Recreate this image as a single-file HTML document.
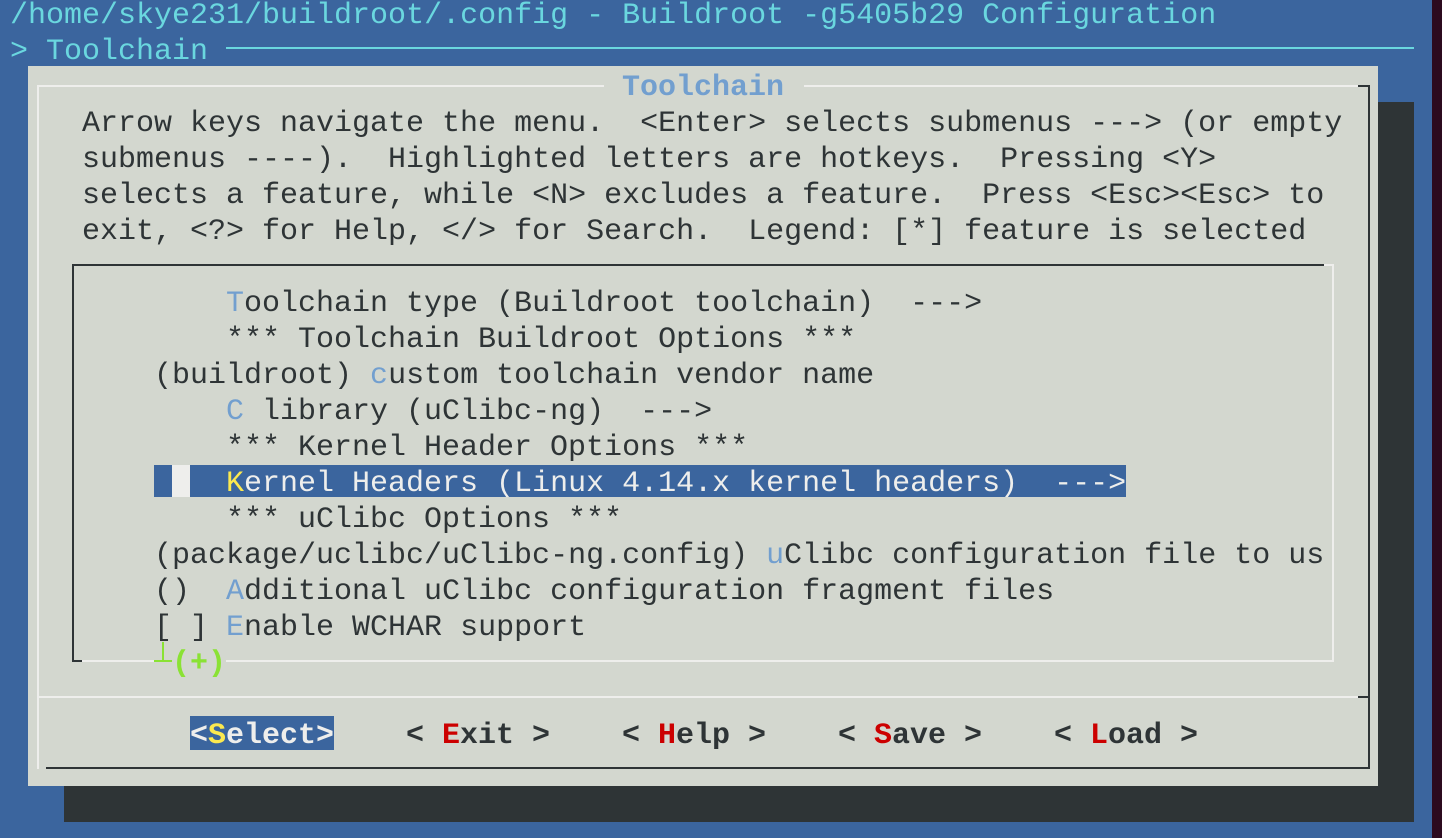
<!DOCTYPE html>
<html><head><meta charset="utf-8"><style>
html,body{margin:0;padding:0}
body{width:1442px;height:838px;background:#3b659e;position:relative;overflow:hidden;font-family:"Liberation Mono","DejaVu Sans Mono",monospace;font-size:30px}
.t{position:absolute;height:36px;line-height:36px;white-space:pre;color:#2e3436;margin-top:2px}
.b{position:absolute}
.hk{color:#729fcf}
.cy{color:#6ad7df}
</style></head><body>
<div class="b" style="left:1432px;top:0;width:10px;height:838px;background:#2c0a1f"></div>
<div class="t cy" style="left:10px;top:-4px">/home/skye231/buildroot/.config - Buildroot -g5405b29 Configuration</div>
<div class="t cy" style="left:10px;top:32px">&gt; Toolchain</div>
<div class="b" style="left:226px;top:47px;width:1188px;height:2px;background:#6ad7df"></div>
<div class="b" style="left:64px;top:102px;width:1350px;height:720px;background:#2e3436"></div>
<div class="b" style="left:28px;top:66px;width:1350px;height:720px;background:#d3d7cf"></div>
<div class="b" style="left:37px;top:85px;width:1331px;height:2px;background:#eeeeec"></div>
<div class="b" style="left:37px;top:85px;width:2px;height:684px;background:#eeeeec"></div>
<div class="b" style="left:1358px;top:85px;width:12px;height:2px;background:#2e3436"></div>
<div class="b" style="left:1368px;top:85px;width:2px;height:684px;background:#2e3436"></div>
<div class="b" style="left:46px;top:767px;width:1324px;height:2px;background:#2e3436"></div>
<div class="b" style="left:37px;top:696px;width:1333px;height:2px;background:#eeeeec"></div>
<div class="b" style="left:1358px;top:696px;width:12px;height:2px;background:#2e3436"></div>
<div class="b" style="left:604px;top:78px;width:200px;height:16px;background:#d3d7cf"></div>
<div class="t hk" style="left:622px;top:68px;font-weight:bold">Toolchain</div>
<div class="t" style="left:82px;top:104px">Arrow keys navigate the menu.  &lt;Enter&gt; selects submenus ---&gt; (or empty</div>
<div class="t" style="left:82px;top:140px">submenus ----).  Highlighted letters are hotkeys.  Pressing &lt;Y&gt;</div>
<div class="t" style="left:82px;top:176px">selects a feature, while &lt;N&gt; excludes a feature.  Press &lt;Esc&gt;&lt;Esc&gt; to</div>
<div class="t" style="left:82px;top:212px">exit, &lt;?&gt; for Help, &lt;/&gt; for Search.  Legend: [*] feature is selected</div>
<div class="b" style="left:72px;top:264px;width:1254px;height:2px;background:#2e3436"></div>
<div class="b" style="left:1324px;top:264px;width:10px;height:2px;background:#eeeeec"></div>
<div class="b" style="left:1332px;top:264px;width:2px;height:398px;background:#eeeeec"></div>
<div class="b" style="left:72px;top:264px;width:2px;height:398px;background:#2e3436"></div>
<div class="b" style="left:72px;top:660px;width:10px;height:2px;background:#2e3436"></div>
<div class="b" style="left:82px;top:660px;width:72px;height:2px;background:#eeeeec"></div>
<div class="b" style="left:154px;top:660px;width:18px;height:2px;background:#8ae234"></div>
<div class="b" style="left:162px;top:642px;width:2px;height:19px;background:#8ae234"></div>
<div class="t" style="left:172px;top:644px;color:#8ae234;font-weight:bold">(+)</div>
<div class="b" style="left:226px;top:660px;width:1108px;height:2px;background:#eeeeec"></div>
<div class="t" style="left:226px;top:284px"><span class="hk">T</span>oolchain type (Buildroot toolchain)  ---&gt;</div>
<div class="t" style="left:226px;top:320px">*** Toolchain Buildroot Options ***</div>
<div class="t" style="left:154px;top:356px">(buildroot) <span class="hk">c</span>ustom toolchain vendor name</div>
<div class="t" style="left:226px;top:392px"><span class="hk">C</span> library (uClibc-ng)  ---&gt;</div>
<div class="t" style="left:226px;top:428px">*** Kernel Header Options ***</div>
<div class="b" style="left:154px;top:465px;width:972px;height:32px;background:#3b659e"></div>
<div class="b" style="left:172px;top:465px;width:18px;height:32px;background:#eeeeec"></div>
<div class="t" style="left:226px;top:464px;color:#eeeeec"><span style="color:#fce94f">K</span>ernel Headers (Linux 4.14.x kernel headers)  ---&gt;</div>
<div class="t" style="left:226px;top:500px">*** uClibc Options ***</div>
<div class="t" style="left:154px;top:536px">(package/uclibc/uClibc-ng.config) <span class="hk">u</span>Clibc configuration file to us</div>
<div class="t" style="left:154px;top:572px">()  <span class="hk">A</span>dditional uClibc configuration fragment files</div>
<div class="t" style="left:154px;top:608px">[ ] <span class="hk">E</span>nable WCHAR support</div>
<div class="b" style="left:190px;top:716px;width:144px;height:34px;background:#3b659e"></div>
<div class="t" style="left:190px;top:716px;color:#eeeeec;font-weight:bold">&lt;<span style="color:#fce94f">S</span>elect&gt;</div>
<div class="t" style="left:406px;top:716px;font-weight:bold">&lt; <span style="color:#cc0000">E</span>xit &gt;</div>
<div class="t" style="left:622px;top:716px;font-weight:bold">&lt; <span style="color:#cc0000">H</span>elp &gt;</div>
<div class="t" style="left:838px;top:716px;font-weight:bold">&lt; <span style="color:#cc0000">S</span>ave &gt;</div>
<div class="t" style="left:1054px;top:716px;font-weight:bold">&lt; <span style="color:#cc0000">L</span>oad &gt;</div>
</body></html>
